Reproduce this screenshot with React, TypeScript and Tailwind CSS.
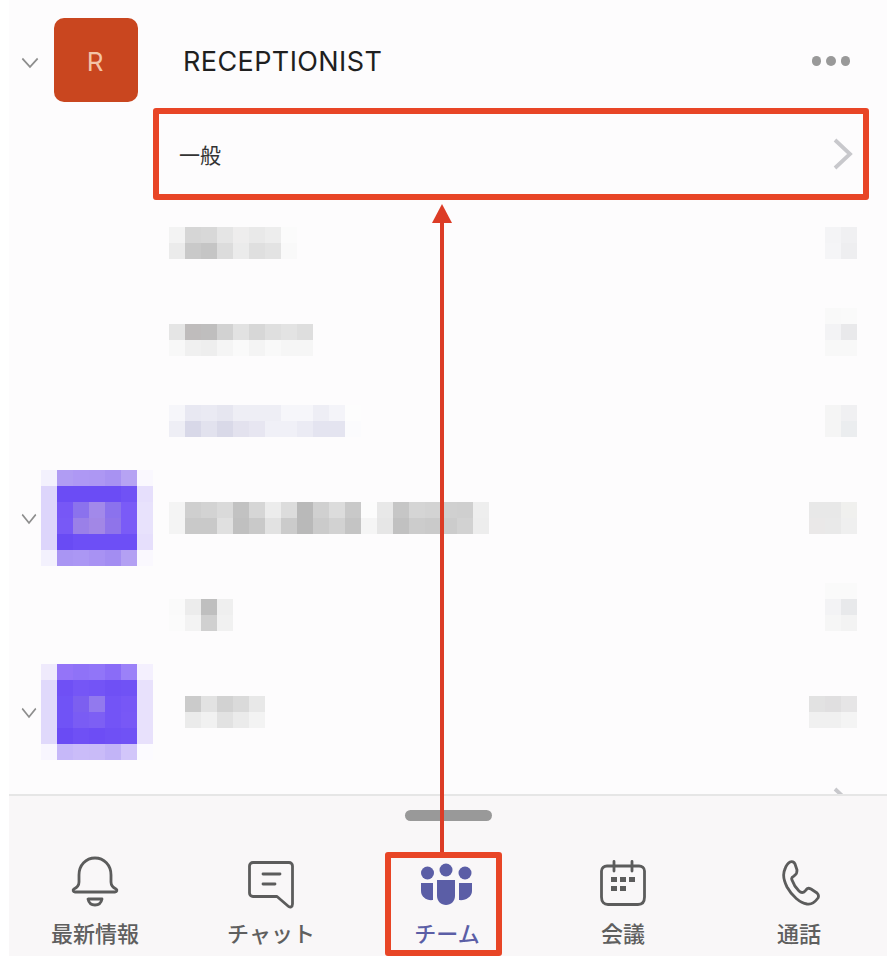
type Grid = string[][];

const g = (rows: string[]): Grid => rows.map((r) => r.split(' ').map((c) => '#' + c));

const text1 = g(['f3f3f3 d6d6d6 d8d8d8 e5e5e5 eeeded e9e9e9 ededed fbfbfb', 'ebebeb c9c9c9 c5c5c5 dcdcdc ebebeb dfdfdf e3e3e3 f9f9f9']);
const text2 = g(['e5e5e5 bfbcbc bfbebe d2d2d2 e2e2e2 d7d7d7 dfdfdf e3e3e3 dedede', 'f8f8f8 f0f0f0 eeeeee f5f5f5 fafafa f4f4f4 f9f9f9 f6f6f6 f6f6f6']);
const text3 = g(['f6f6fa e8e8f2 eaeaf3 e6e6f0 eeeef5 eeeef5 eeeef5 f6f6fa f6f6fa eeeef5 f4f4f9 fdfdfd', 'eeeef5 d8d8e8 e2e2ee d9d9e8 e3e2ee e7e6f1 f0f0f7 f0f0f7 ebebf4 e4e4f0 e4e4f0 fbfbfd']);
const text4 = g([
  'f4f4f4 cfcfcf d3d3d3 dadada c2c2c2 d6d6d6 ececec dcdcdc b9b9b9 d0d0d0 dcdcdc c9c9c9 fcfcfc e8e8e8 c6c6c6 d5d5d5 d3d3d3 d0d0d0 cfcfcf eeeeee',
  'f4f4f4 c9c9c9 c9c9c9 e0e0e0 c0c0c0 c9c9c9 e2e2e2 cbcbcb b9b9b9 cbcbcb d2d2d2 c4c4c4 f5f5f5 e6e6e6 c1c1c1 cccccc cacaca cccccc d2d2d2 ededed',
]);
const text5 = g(['fafafa ececec bfbfbf efefef', 'fbfbfb f3f3f3 d0d0d0 f1f1f1']);
const text6 = g(['cbcbcb e2e2e2 d2d2d2 dadada e8e8e8', 'ebebeb f1f1f1 e2e2e2 ebebeb f3f3f3']);

const right1 = g(['f4f4f6 f0f0f2', 'f5f5f7 eeeef0']);
const right2 = g(['f9f9f9 fafafa', 'f3f3f5 e9e9eb', 'f8f8f8 f8f8f8']);
const right3 = g(['f5f5f5 f0f0f2', 'f5f5f5 ebedef']);
const right4 = g(['e8e8e8 e8e8e8 f0f0ee', 'eae8e8 e9e9e9 efefef']);
const right5 = g(['fafafa fafafa', 'f3f3f5 e8e9eb', 'f6f6f6 f3f3f3']);
const right6 = g(['e2e2e2 e0dfe0 e6e5e6', 'f0f0f0 f0f0f0 f4f4f4']);

const tile1 = g([
  'f3f1fd b09cf3 ae98f4 ad97f3 a892f2 b6a3f3 faf8fe',
  'ddd5fb 6b4cf5 6b4cf5 6b4cf5 6b4cf5 7052f5 e6dffc',
  'ddd5fb 7757f6 8b72ed a289ea 8b72ed 7a5bf7 e8e2fc',
  'ddd5fb 7859f6 9a80e8 a287e6 8f74ea 7a5bf7 e8e2fc',
  'ddd5fb 694bf4 6d4ff6 6d4ff6 6d4ff6 6d4ff6 e6dffc',
  'f3f1fd a995f3 ab97f4 a892f3 a38df2 b3a0f3 faf8fe',
]);
const tile2 = g([
  'efeafc 9474f8 8f72f7 9175f8 8a6cf7 9b81f8 f4f0fe',
  'e0d9fb 6f50f5 7556f6 7354f6 6f50f5 7052f5 e8e1fc',
  'e0d9fb 7053f6 7c5ff0 9279ee 7354f6 7757f6 e8e1fc',
  'e0d9fb 7053f6 7a5cf4 7d5ff4 7354f6 7858f6 e8e1fc',
  'e0d9fb 6a4bf4 6f50f5 6d4df5 6f50f5 7052f5 e8e1fc',
  'f8f6fe c6b8f9 cabcf9 c9bbf8 c2b4f7 d2c6fa fcfbff',
]);

function Mosaic({ cells }: { cells: Grid }) {
  return (
    <div className="flex flex-col shrink-0">
      {cells.map((row, i) => (
        <div key={i} className="flex">
          {row.map((c, j) => (
            <div key={j} className="w-4 h-4" style={{ backgroundColor: c }} />
          ))}
        </div>
      ))}
    </div>
  );
}

function ChevronDown({ width = 20 }: { width?: number }) {
  return (
    <svg width={width} height="12" viewBox="0 0 20 12" fill="none" preserveAspectRatio="none" className="shrink-0">
      <path d="M1.5 1.5 L10 10 L18.5 1.5" stroke="#8e8e8e" strokeWidth="1.8" />
    </svg>
  );
}

function ChevronRight() {
  return (
    <svg width="20" height="32" viewBox="0 0 20 32" fill="none" className="shrink-0">
      <path d="M2 2 L17 16 L2 30" stroke="#c8c8cc" strokeWidth="3.8" />
    </svg>
  );
}

function ChannelRow({ left, right, className }: { left: Grid; right: Grid; className: string }) {
  return (
    <div className={`flex items-end justify-between pl-[160px] pr-[30px] ${className}`}>
      <Mosaic cells={left} />
      <Mosaic cells={right} />
    </div>
  );
}

function TeamRow({ tile, name, right, className }: { tile: Grid; name: React.ReactNode; right: Grid; className: string }) {
  return (
    <div className={`flex items-center justify-between pr-[30px] ${className}`}>
      <div className="flex items-center">
        <div className="w-8 pl-[12px] pt-[2px]">
          <ChevronDown width={16} />
        </div>
        <Mosaic cells={tile} />
        {name}
      </div>
      <Mosaic cells={right} />
    </div>
  );
}

function BellIcon() {
  return (
    <svg width="48" height="54" viewBox="0 0 48 54" fill="none" stroke="#5c5c5c" strokeWidth="2.8" strokeLinejoin="round" className="mb-px">
      <path d="M8 20 C8 10 15 3 24 3 C33 3 40 10 40 20 V27 C40 31 43 33 45 34 C46.5 35 46 37 44 37 H4 C2 37 1.5 35 3 34 C5 33 8 31 8 27 Z" />
      <path d="M17 44 H31 C30 49 27 50 24 50 C21 50 18 49 17 44 Z" />
    </svg>
  );
}

function ChatIcon() {
  return (
    <svg width="46" height="50" viewBox="0 0 46 50" fill="none" stroke="#5c5c5c" strokeWidth="2.8" strokeLinecap="round" strokeLinejoin="round">
      <path d="M5 2.5 H41 C43 2.5 44.5 4 44.5 6 V44 C44.5 47 42 48 40 46 L29 36.5 H5 C3 36.5 1.5 35 1.5 33 V6 C1.5 4 3 2.5 5 2.5 Z" />
      <path d="M15 14 H32 M15 24 H27" />
    </svg>
  );
}

function TeamsIcon() {
  return (
    <svg width="54" height="46" viewBox="0 0 54 46" fill="#5b5ea6" className="mb-[2px]">
      <circle cx="7.5" cy="11" r="6.5" />
      <circle cx="26" cy="8" r="6.5" />
      <circle cx="45" cy="11" r="6.5" />
      <path d="M1 21 H13 V38 C7 39 1 35 1 29 Z" />
      <path d="M17 18 H35 V34 C35 39 31 43 26 43 C21 43 17 39 17 34 Z" />
      <path d="M39 21 H52 V29 C52 35 45 39 39 38 Z" />
    </svg>
  );
}

function CalendarIcon() {
  return (
    <svg width="46" height="46" viewBox="0 0 46 46" fill="none" stroke="#5c5c5c" strokeWidth="2.8" strokeLinecap="round" strokeLinejoin="round" className="mb-1">
      <path d="M7 6 H39 C42 6 44.5 8 44.5 11 V37 C44.5 42 42 44.5 38 44.5 H8 C4 44.5 1.5 42 1.5 37 V11 C1.5 8 4 6 7 6 Z" />
      <path d="M14 1.5 V11 M32 1.5 V11" />
      <g fill="#5c5c5c" stroke="none">
        <rect x="11" y="17" width="6" height="5" />
        <rect x="20" y="17" width="6" height="5" />
        <rect x="29" y="17" width="6" height="5" />
        <rect x="11" y="26" width="6" height="5" />
        <rect x="20" y="26" width="6" height="5" />
      </g>
    </svg>
  );
}

function PhoneIcon() {
  return (
    <svg width="38" height="46" viewBox="0 0 38 46" fill="none" stroke="#5c5c5c" strokeWidth="2.8" strokeLinejoin="round" className="mb-1 ml-1">
      <path d="M3 9 C1 13 1 19 5 27 C10 36 18 43 25 44 C29 45 33 42 36 38 C37 36 36 34 35 33 L29 29 C27 28 25 28 24 30 L22 32 C20 33 19 33 17 31 C14 28 11 23 10 20 C9 18 10 17 12 16 L13 15 C15 14 15 12 15 10 L13 4 C12 2 10 1 8 2 C6 3 4 6 3 9 Z" />
    </svg>
  );
}

function Tab({ icon, label, active }: { icon: React.ReactNode; label: string; active?: boolean }) {
  return (
    <div className="flex flex-col items-center">
      <div className="h-[58px] flex items-end justify-center">{icon}</div>
      <div className={`mt-[9px] text-[22px] leading-[30px] font-medium ${active ? 'text-[#5b5ea6]' : 'text-[#5f5f5f]'}`}>
        {label}
      </div>
    </div>
  );
}

export default function App() {
  return (
    <div className="relative w-[890px] h-[962px] overflow-hidden bg-white font-['Inter','Noto_Sans_CJK_JP',sans-serif]">
      <div className="ml-[9px] mr-[3px] h-[956px] flex flex-col">
        <div className="flex-1 min-h-0 overflow-hidden bg-[#fdfcfd]">
          {/* RECEPTIONIST team */}
          <div className="h-[108px] pt-[18px] flex items-start pr-[37px]">
            <div className="w-[45px] pl-[12px] pt-[39px]">
              <ChevronDown width={18} />
            </div>
            <div className="w-[84px] h-[84px] rounded-[10px] bg-[#c9461f] flex items-center justify-center pt-[3px] pr-[2px] text-[#f3c4a8] text-[26px]">
              R
            </div>
            <div className="ml-[45px] pt-[26px] text-[27px] leading-[36px] tracking-[0.4px] text-[#1f1f1f]">RECEPTIONIST</div>
            <div className="ml-auto pt-[38px] flex gap-[5px]">
              <div className="w-[9.5px] h-[9.5px] rounded-full bg-[#999]" />
              <div className="w-[9.5px] h-[9.5px] rounded-full bg-[#999]" />
              <div className="w-[9.5px] h-[9.5px] rounded-full bg-[#999]" />
            </div>
          </div>
          <div className="h-[91px] flex items-center justify-between pl-[170px] pr-[34px]">
            <span className="text-[21px] text-[#333] pt-[4px]">一般</span>
            <ChevronRight />
          </div>

          <ChannelRow className="mt-[28px]" left={text1} right={right1} />
          <ChannelRow className="mt-[49px]" left={text2} right={right2} />
          <ChannelRow className="mt-[49px]" left={text3} right={right3} />

          <TeamRow className="mt-[33px]" tile={tile1} name={<div className="ml-[16px]"><Mosaic cells={text4} /></div>} right={right4} />
          <ChannelRow className="mt-[17px]" left={text5} right={right5} />
          <TeamRow className="mt-[33px]" tile={tile2} name={<div className="ml-[32px]"><Mosaic cells={text6} /></div>} right={right6} />

          <div className="mt-[27px] flex justify-end pr-[34px]">
            <ChevronRight />
          </div>
        </div>

        {/* tab bar */}
        <div className="h-[162px] shrink-0 border-t-2 border-[#e6e6e6] bg-[#f9f7f8] flex flex-col">
          <div className="mt-[14px] self-center w-[87px] h-[11px] rounded-full bg-[#999]" />
          <div className="mt-[31px] -ml-[2px] grid grid-cols-[repeat(5,176px)]">
            <Tab icon={<BellIcon />} label="最新情報" />
            <Tab icon={<ChatIcon />} label="チャット" />
            <Tab icon={<TeamsIcon />} label="チーム" active />
            <Tab icon={<CalendarIcon />} label="会議" />
            <Tab icon={<PhoneIcon />} label="通話" />
          </div>
        </div>
      </div>

      {/* red annotations over the screenshot */}
      <div className="absolute left-[153px] top-[108px] w-[716px] h-[92px] border-[6px] border-[#e84526] rounded-[3px]" />
      <div className="absolute left-[385px] top-[852px] w-[117px] h-[104px] border-[6px] border-[#e84526] rounded-[3px]" />
      <div className="absolute left-[440px] top-[222px] w-[4px] h-[630px] bg-[#dc3c26]" />
      <div className="absolute left-[431.5px] top-[204px] w-0 h-0 border-l-[10.5px] border-r-[10.5px] border-b-[19px] border-l-transparent border-r-transparent border-b-[#dc3c26]" />
    </div>
  );
}
